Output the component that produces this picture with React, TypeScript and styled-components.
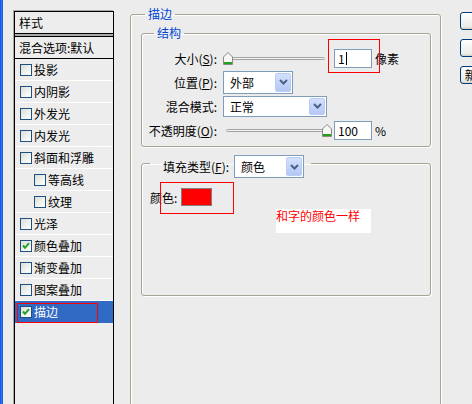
import styled, { createGlobalStyle } from "styled-components";

const GlobalStyle = createGlobalStyle`
  body {
    margin: 0;
    background: #ececec;
    font-family: "Noto Sans CJK SC", "Noto Sans", sans-serif;
    font-size: 12px;
    color: #000;
  }
`;

const Screen = styled.div`
  position: relative;
  width: 472px;
  height: 404px;
  overflow: hidden;
  display: flex;
  align-items: flex-start;
  background: #ececec;
`;

const BlueEdge = styled.div`
  flex-shrink: 0;
  width: 3px;
  height: 404px;
  background: linear-gradient(90deg, #0a4fdc, #3b7cf5 60%, #0b46c8);
`;

const StyleList = styled.div`
  flex-shrink: 0;
  box-sizing: border-box;
  margin: 11px 0 0 11px;
  width: 100px;
  height: 420px;
  border: 1px solid #000;
  box-shadow: -1px -1px 0 #a8a8a8;
  background: #ededed;
`;

const ListHeader = styled.div`
  height: 21px;
  line-height: 21px;
  padding-left: 4px;
  border-bottom: 1px solid #000;
`;

const HeaderGap = styled.div`
  height: 2px;
  background: #a9a9a9;
  border-bottom: 1px solid #000;
`;

const BlendRow = styled.div`
  height: 21px;
  line-height: 21px;
  padding-left: 4px;
  border-bottom: 1px solid #000;
  white-space: nowrap;
`;

const ItemRow = styled.div<{ $indent?: boolean; $selected?: boolean }>`
  display: flex;
  align-items: center;
  height: 21px;
  padding-left: ${(p) => (p.$indent ? 19 : 5)}px;
  border-bottom: 1px solid ${(p) => (p.$selected ? "#316ac5" : "#fff")};
  background: ${(p) => (p.$selected ? "#316ac5" : "transparent")};
  color: ${(p) => (p.$selected ? "#fff" : "#000")};
  white-space: nowrap;
`;

const Box = styled.span`
  box-sizing: border-box;
  display: inline-flex;
  align-items: center;
  justify-content: center;
  width: 12px;
  height: 12px;
  margin-right: 2px;
  border: 1px solid #1c5180;
  background: linear-gradient(135deg, #dcdcd6, #f6f6f4 70%, #fff);
`;

const Checkbox = ({ checked }: { checked?: boolean }) => (
  <Box>
    {checked && (
      <svg width="8" height="8" viewBox="0 0 8 8">
        <path d="M1 3.5 L3 5.8 L7 1.2" fill="none" stroke="#21a121" strokeWidth="2" />
      </svg>
    )}
  </Box>
);

const Group = styled.fieldset<{ $height?: number; $pad?: string }>`
  box-sizing: border-box;
  margin: 0;
  min-width: 0;
  padding: ${(p) => p.$pad || "0"};
  height: ${(p) => (p.$height ? `${p.$height}px` : "auto")};
  border: 1px solid #a7a592;
  border-radius: 3px;
  box-shadow: 1px 1px 0 #fff, inset 1px 1px 0 #fff;
`;

const MainGroup = styled(Group)`
  flex-shrink: 0;
  width: 311px;
  margin: 6px 0 0 16px;
`;

const Legend = styled.legend<{ $offset: number }>`
  margin-left: ${(p) => p.$offset}px;
  padding: 0 3px;
  line-height: 16px;
  color: #0046d5;
`;

const FillLegend = styled.legend`
  display: flex;
  align-items: center;
  margin-left: 8px;
  padding: 7px 7px 0 13px;
  white-space: nowrap;
`;

const StructGroup = styled(Group)`
  margin-top: 3px;
  padding: 5px 0 4px 0;
`;

const FillGroup = styled(Group)`
  margin-top: 1px;
`;

const FormRow = styled.div`
  display: flex;
  align-items: center;
  height: 24px;
  white-space: nowrap;
`;

const RowLabel = styled.span`
  width: 75px;
  margin-right: 6px;
  text-align: right;
`;

const U = styled.span`
  text-decoration: underline;
`;

const SliderWrap = styled.div`
  position: relative;
  width: 109px;
  height: 12px;
`;

const Track = styled.div`
  position: absolute;
  left: 3px;
  right: 7px;
  top: 5px;
  height: 3px;
  box-sizing: border-box;
  border: 1px solid #a2a2a2;
  border-radius: 2px;
  background: #f4f4f2;
`;

const Thumb = styled.svg<{ $atEnd?: boolean }>`
  position: absolute;
  top: 0;
  ${(p) => (p.$atEnd ? "right: 0;" : "left: 0;")}
`;

const Slider = ({ atEnd }: { atEnd?: boolean }) => (
  <SliderWrap>
    <Track />
    <Thumb $atEnd={atEnd} width="10" height="13" viewBox="0 0 10 13">
      <path d="M0.5 5 L5 0.5 L9.5 5 V12.5 H0.5 Z" fill="#f7f7f4" stroke="#8a8a80" />
      <rect x="1" y="10" width="8" height="2" fill="#21a121" />
    </Thumb>
  </SliderWrap>
);

const NumberInput = styled.div`
  box-sizing: border-box;
  display: flex;
  align-items: center;
  width: 38px;
  height: 19px;
  margin-left: 2px;
  padding-left: 3px;
  border: 1px solid #7f9db9;
  background: #fff;
`;

const Caret = styled.span`
  display: inline-block;
  width: 1px;
  height: 13px;
  margin-left: 1px;
  background: #000;
`;

const Unit = styled.span`
  margin-left: 3px;
`;

const SelectBox = styled.div<{ $w: number; $h: number }>`
  box-sizing: border-box;
  display: flex;
  align-items: center;
  justify-content: space-between;
  width: ${(p) => p.$w}px;
  height: ${(p) => p.$h}px;
  padding: 1px 1px 1px 6px;
  border: 1px solid #7f9db9;
  background: #fff;
`;

const DropButton = styled.span`
  box-sizing: border-box;
  display: flex;
  align-items: center;
  justify-content: center;
  width: 16px;
  height: 100%;
  border: 1px solid #b9cdf6;
  border-radius: 2px;
  background: linear-gradient(180deg, #d3e0fd, #b4c8f6);
`;

const Select = ({ value, w, h }: { value: string; w: number; h: number }) => (
  <SelectBox $w={w} $h={h}>
    <span>{value}</span>
    <DropButton>
      <svg width="9" height="6" viewBox="0 0 9 6">
        <path d="M1 1 L4.5 4.5 L8 1" fill="none" stroke="#4d6185" strokeWidth="2" />
      </svg>
    </DropButton>
  </SelectBox>
);

const FillSelectGap = styled.span`
  margin-left: 5px;
`;

const ColorRow = styled.div`
  display: flex;
  align-items: center;
  height: 18px;
  margin-top: 10px;
  padding-left: 8px;
`;

const Swatch = styled.div<{ $color: string }>`
  box-sizing: border-box;
  width: 31px;
  height: 18px;
  margin-left: 4px;
  border: 1px solid #808080;
  background: ${(p) => p.$color};
`;

const ButtonColumn = styled.div`
  flex-shrink: 0;
  display: flex;
  flex-direction: column;
  gap: 9px;
  margin: 12px 0 0 19px;
`;

const DialogButton = styled.div`
  box-sizing: border-box;
  width: 86px;
  height: 18px;
  line-height: 16px;
  text-align: center;
  border: 1px solid #003c74;
  border-radius: 3px;
  background: linear-gradient(180deg, #fff, #ecebe6 85%, #d6d0c5);
  white-space: nowrap;
`;

const Mark = styled.div<{ $x: number; $y: number; $w: number; $h: number }>`
  position: absolute;
  left: ${(p) => p.$x}px;
  top: ${(p) => p.$y}px;
  width: ${(p) => p.$w}px;
  height: ${(p) => p.$h}px;
  box-sizing: border-box;
  border: 1px solid #f00;
`;

const Note = styled.div`
  position: absolute;
  left: 276px;
  top: 209px;
  width: 95px;
  height: 24px;
  background: #fff;
  color: #f00;
  line-height: 14px;
  white-space: nowrap;
`;

const effects = [
  { label: "投影" },
  { label: "内阴影" },
  { label: "外发光" },
  { label: "内发光" },
  { label: "斜面和浮雕" },
  { label: "等高线", indent: true },
  { label: "纹理", indent: true },
  { label: "光泽" },
  { label: "颜色叠加", checked: true },
  { label: "渐变叠加" },
  { label: "图案叠加" },
  { label: "描边", checked: true, selected: true },
];

export default function App() {
  return (
    <>
      <GlobalStyle />
      <Screen>
        <BlueEdge />
        <StyleList>
          <ListHeader>样式</ListHeader>
          <HeaderGap />
          <BlendRow>混合选项:默认</BlendRow>
          {effects.map((e) => (
            <ItemRow key={e.label} $indent={e.indent} $selected={e.selected}>
              <Checkbox checked={e.checked} />
              {e.label}
            </ItemRow>
          ))}
        </StyleList>

        <MainGroup $height={420} $pad="0 9px 0 10px">
          <Legend $offset={4}>描边</Legend>
          <StructGroup>
            <Legend $offset={12}>结构</Legend>
            <FormRow>
              <RowLabel>
                大小(<U>S</U>):
              </RowLabel>
              <Slider />
              <NumberInput>
                1<Caret />
              </NumberInput>
              <Unit>像素</Unit>
            </FormRow>
            <FormRow>
              <RowLabel>
                位置(<U>P</U>):
              </RowLabel>
              <Select value="外部" w={70} h={23} />
            </FormRow>
            <FormRow>
              <RowLabel>混合模式:</RowLabel>
              <Select value="正常" w={104} h={21} />
            </FormRow>
            <FormRow>
              <RowLabel>
                不透明度(<U>O</U>):
              </RowLabel>
              <Slider atEnd />
              <NumberInput>100</NumberInput>
              <Unit>%</Unit>
            </FormRow>
          </StructGroup>

          <FillGroup $height={148}>
            <FillLegend>
              填充类型(<U>F</U>):
              <FillSelectGap>
                <Select value="颜色" w={70} h={23} />
              </FillSelectGap>
            </FillLegend>
            <ColorRow>
              颜色:
              <Swatch $color="#ff0000" />
            </ColorRow>
          </FillGroup>
        </MainGroup>

        <ButtonColumn>
          <DialogButton>确定</DialogButton>
          <DialogButton>取消</DialogButton>
          <DialogButton>新建样式(W)...</DialogButton>
        </ButtonColumn>

        <Mark $x={17} $y={303} $w={81} $h={20} />
        <Mark $x={328} $y={39} $w={52} $h={34} />
        <Mark $x={160} $y={182} $w={74} $h={32} />
        <Note>和字的颜色一样</Note>
      </Screen>
    </>
  );
}
